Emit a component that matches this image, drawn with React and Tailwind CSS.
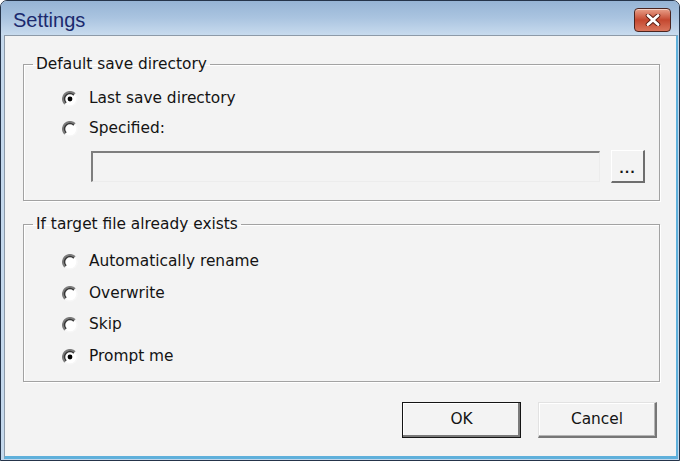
import React, { useState } from "react";

const Radio = ({ checked }) => (
  <svg width="16" height="16" viewBox="0 0 12 12" className="shrink-0">
    <circle cx="6" cy="6" r="5.3" fill="#ffffff" />
    <path d="M2.25 9.75 A5.3 5.3 0 0 1 9.75 2.25" fill="none" stroke="#7c7c7c" strokeWidth="1.5" />
    <path d="M3.1 8.9 A4.1 4.1 0 0 1 8.9 3.1" fill="none" stroke="#363636" strokeWidth="1.1" />
    <path d="M9.75 2.25 A5.3 5.3 0 0 1 2.25 9.75" fill="none" stroke="#f7f7f7" strokeWidth="1.2" />
    {checked && <circle cx="6" cy="6" r="1.8" fill="#000000" />}
  </svg>
);

const Option = ({ label, checked, onClick, h }) => (
  <div className={`flex items-center gap-[11px] pl-[38px] ${h}`} onClick={onClick}>
    <Radio checked={checked} />
    <span>{label}</span>
  </div>
);

const CloseIcon = () => (
  <svg width="16" height="12" viewBox="0 0 16 12">
    <path d="M3 1.5 L13 10.5 M13 1.5 L3 10.5" stroke="#5a1b10" strokeWidth="4.6" strokeLinecap="round" />
    <path d="M3 1.5 L13 10.5 M13 1.5 L3 10.5" stroke="#ffffff" strokeWidth="2.8" strokeLinecap="round" />
  </svg>
);

export default function App() {
  const [dir, setDir] = useState("last");
  const [exists, setExists] = useState("prompt");

  return (
    <div className="w-[680px] h-[461px] flex flex-col bg-[#c4d8ec] border border-[#25344a] rounded-t-[7px] overflow-hidden font-['DejaVu_Sans',sans-serif] text-[15.4px] text-[#141414]">
      {/* title bar */}
      <div className="h-[34px] shrink-0 flex items-center justify-between pl-[12px] pr-[8px] bg-gradient-to-b from-[#96b4d5] via-[#aac4e0] to-[#c8dbee]">
        <span className="font-['Liberation_Sans',sans-serif] text-[20px] text-[#1b2a6e] pt-[3px]">Settings</span>
        <button className="w-[37px] h-[24px] mt-[4px] flex items-center justify-center rounded-[4px] border border-[#4b2520] bg-gradient-to-b from-[#e8a08a] via-[#c4472f] to-[#d9755c] shadow-[inset_0_1px_0_#f6d0c4]">
          <CloseIcon />
        </button>
      </div>

      {/* client area */}
      <div className="flex-1 flex flex-col ml-[3px] mr-[1px] mb-[1px] bg-[#f3f3f3] border-l border-t border-[#8d9aa8] border-r-[2px] border-b-[3px] border-r-[#5fb0db] border-b-[#5fb0db] pt-[19px] pl-[18px] pr-[16px]">
        <fieldset className="h-[146px] border border-[#a2a2a2] shadow-[inset_1px_1px_0_#ffffff,1px_1px_0_#ffffff] px-0">
          <legend className="ml-[9px] px-[3px] leading-[18px]">Default save directory</legend>
          <div className="pt-[11px]">
            <Option label="Last save directory" checked={dir === "last"} onClick={() => setDir("last")} h="h-[30px]" />
            <Option label="Specified:" checked={dir === "spec"} onClick={() => setDir("spec")} h="h-[30px]" />
            <div className="flex items-center gap-[11px] mt-[6px] pl-[67px] pr-[14px]">
              <div className="flex-1 h-[31px] bg-[#f3f3f3] border-t-[2px] border-l-[2px] border-[#7e7e7e] border-b border-r border-b-[#ececec] border-r-[#ececec]" />
              <button className="w-[34px] h-[33px] flex items-end justify-center pb-[6px] bg-[#f3f3f3] border-t border-l border-[#ffffff] border-b-[2px] border-r-[2px] border-b-[#6e6e6e] border-r-[#6e6e6e] text-[12px] font-bold leading-none tracking-[1px]">
                ...
              </button>
            </div>
          </div>
        </fieldset>

        <fieldset className="mt-[14px] h-[167px] border border-[#a2a2a2] shadow-[inset_1px_1px_0_#ffffff,1px_1px_0_#ffffff] px-0">
          <legend className="ml-[9px] px-[3px] leading-[18px]">If target file already exists</legend>
          <div className="pt-[13px]">
            <Option label="Automatically rename" checked={exists === "rename"} onClick={() => setExists("rename")} h="h-[32px]" />
            <Option label="Overwrite" checked={exists === "over"} onClick={() => setExists("over")} h="h-[31px]" />
            <Option label="Skip" checked={exists === "skip"} onClick={() => setExists("skip")} h="h-[32px]" />
            <Option label="Prompt me" checked={exists === "prompt"} onClick={() => setExists("prompt")} h="h-[32px]" />
          </div>
        </fieldset>

        <div className="flex justify-end gap-[17px] mt-[20px] pr-[3px]">
          <button className="w-[119px] h-[36px] border border-[#141414] bg-[#f3f3f3] shadow-[inset_-2px_-2px_0_#7a7a7a,inset_1px_1px_0_#ffffff]">
            OK
          </button>
          <button className="w-[119px] h-[36px] bg-[#f3f3f3] border-t border-l border-[#e2e2e2] border-b-[2px] border-r-[2px] border-b-[#767676] border-r-[#767676] shadow-[inset_-1px_-1px_0_#b4b4b4,inset_1px_1px_0_#ffffff]">
            Cancel
          </button>
        </div>
      </div>
    </div>
  );
}
